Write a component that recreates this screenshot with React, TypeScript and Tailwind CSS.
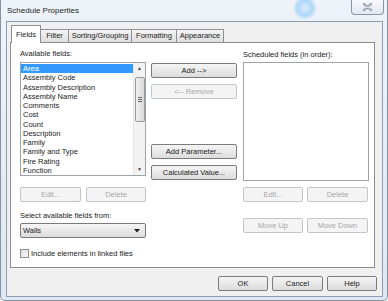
import React from 'react';

const font = { fontFamily: '"Liberation Sans", Arial, sans-serif' };

const fields = [
  'Area',
  'Assembly Code',
  'Assembly Description',
  'Assembly Name',
  'Comments',
  'Cost',
  'Count',
  'Description',
  'Family',
  'Family and Type',
  'Fire Rating',
  'Function',
  'Keynote',
];

const tabs = [
  { label: 'Fields', w: 'w-[30px]' },
  { label: 'Filter', w: 'w-[28px]' },
  { label: 'Sorting/Grouping', w: 'w-[63px]' },
  { label: 'Formatting', w: 'w-[45px]' },
  { label: 'Appearance', w: 'w-[47px]' },
];

function Btn({ label, w, disabled = false }: { label: string; w: string; disabled?: boolean }) {
  return (
    <div
      className={`${w} h-[15px] flex items-center justify-center rounded-[2px] border text-[7.5px] leading-none ${
        disabled
          ? 'border-[#c2c5c9] bg-[#f4f4f4] text-[#a7a7a7]'
          : 'border-[#7b7b7b] bg-gradient-to-b from-[#f5f5f5] to-[#dcdcdc] text-[#1b1b1b]'
      }`}
    >
      {label}
    </div>
  );
}

export default function App() {
  return (
    <div style={font} className="w-[388px] h-[301px] bg-white overflow-hidden">
      <div className="relative w-[388px] h-[301px] bg-gradient-to-b from-[#eef3f9] to-[#dfe8f2] border-x border-b border-[#8592a3] rounded-b-[5px]">
        {/* title */}
        <div className="h-[21px] flex items-center pl-[6px] text-[8px] text-[#1e1e1e]">Schedule Properties</div>

        {/* glow */}
        <div className="absolute left-[292px] top-[-4px] w-[24px] h-[24px] rounded-full bg-[radial-gradient(circle,#d6ecff_0%,#9fd0f5_45%,rgba(200,230,255,0)_72%)] opacity-80" />

        {/* close button */}
        <div className="absolute left-[350px] top-0 w-[33px] h-[15px] rounded-b-[4px] border border-t-0 border-[#8a96a6] bg-gradient-to-b from-[#f7f9fc] to-[#e2e8f0] flex items-center justify-center">
          <svg width="9" height="8" viewBox="0 0 9 8">
            <path d="M1 1 L8 7 M8 1 L1 7" stroke="#7c8590" strokeWidth="2.2" strokeLinecap="round" />
            <path d="M1 1 L8 7 M8 1 L1 7" stroke="#f4f6f8" strokeWidth="0.8" strokeLinecap="round" />
          </svg>
        </div>

        {/* client area */}
        <div className="ml-[5px] w-[377px] h-[276px] border border-[#8e9db1] bg-[#f0f0f0] flex flex-col">
          {/* tabs */}
          <div className="ml-[4px] mt-[3px] flex items-end h-[18px] relative z-10 -mb-px">
            {tabs.map((t, i) =>
              i === 0 ? (
                <div
                  key={t.label}
                  className={`${t.w} h-[18px] border border-b-0 border-[#8c8e94] bg-white text-[7.5px] text-[#1b1b1b] flex items-center justify-center rounded-t-[1px]`}
                >
                  {t.label}
                </div>
              ) : (
                <div
                  key={t.label}
                  className={`${t.w} h-[14px] border border-l-0 border-[#8c8e94] bg-gradient-to-b from-[#f4f4f4] to-[#dedede] text-[7.5px] text-[#1b1b1b] flex items-center justify-center`}
                >
                  {t.label}
                </div>
              )
            )}
          </div>

          {/* panel */}
          <div className="ml-[3px] w-[365px] h-[226px] border border-[#8c8e94] bg-white flex text-[7.5px] text-[#1b1b1b]">
            {/* left column */}
            <div className="ml-[9px] w-[126px] flex flex-col">
              <div className="mt-[6px] h-[9px] leading-[9px]">Available fields:</div>
              <div className="mt-[4px] h-[114px] border border-[#9ea3a9] bg-white flex overflow-hidden">
                <div className="flex-1 pt-px overflow-hidden">
                  {fields.map((f, i) => (
                    <div
                      key={f}
                      className={`h-[9.25px] leading-[9.25px] pl-[2px] whitespace-nowrap ${
                        i === 0 ? 'bg-[#3399ff] text-white' : ''
                      }`}
                    >
                      {f}
                    </div>
                  ))}
                </div>
                <div className="w-[12px] bg-[#f2f2f2] border-l border-[#e6e6e6] flex flex-col items-center">
                  <div className="h-[12px] flex items-center justify-center text-[5px] text-[#3c3c3c]">▲</div>
                  <div className="mt-[2px] w-[10px] h-[45px] rounded-[2px] border border-[#9a9a9a] bg-gradient-to-r from-[#f1f1f1] to-[#d8d8d8] flex flex-col items-center justify-center gap-px">
                    <div className="w-[4px] h-px bg-[#6a6a6a]" />
                    <div className="w-[4px] h-px bg-[#6a6a6a]" />
                    <div className="w-[4px] h-px bg-[#6a6a6a]" />
                  </div>
                  <div className="flex-1" />
                  <div className="h-[10px] flex items-center justify-center text-[5px] text-[#3c3c3c]">▼</div>
                </div>
              </div>
              <div className="mt-[11px] flex gap-[5px]">
                <Btn label="Edit..." w="w-[61px]" disabled />
                <Btn label="Delete" w="w-[60px]" disabled />
              </div>
              <div className="mt-[9px] h-[9px] leading-[9px]">Select available fields from:</div>
              <div className="mt-[3px] w-[126px] h-[15px] rounded-[2px] border border-[#7b7b7b] bg-gradient-to-b from-[#f5f5f5] to-[#dcdcdc] flex items-center pl-[2px] pr-[5px]">
                <span className="flex-1">Walls</span>
                <svg width="6" height="4" viewBox="0 0 6 4">
                  <path d="M0 0 H6 L3 3.5 Z" fill="#1b1b1b" />
                </svg>
              </div>
              <div className="mt-[11px] flex items-center gap-[2px]">
                <div className="w-[9px] h-[9px] border border-[#8f8f8f] bg-gradient-to-br from-[#dcdcdc] to-[#fbfbfb]" />
                <span className="leading-[9px]">Include elements in linked files</span>
              </div>
            </div>

            {/* middle column */}
            <div className="ml-[5px] w-[86px] flex flex-col">
              <div className="mt-[20px]">
                <Btn label="Add -->" w="w-[86px]" />
              </div>
              <div className="mt-[6px]">
                <Btn label="<-- Remove" w="w-[86px]" disabled />
              </div>
              <div className="mt-[45px]">
                <Btn label="Add Parameter..." w="w-[86px]" />
              </div>
              <div className="mt-[6px]">
                <Btn label="Calculated Value..." w="w-[86px]" />
              </div>
            </div>

            {/* right column */}
            <div className="ml-[6px] w-[126px] flex flex-col">
              <div className="mt-[7px] h-[9px] leading-[9px]">Scheduled fields (in order):</div>
              <div className="mt-[3px] h-[119px] border border-[#9ea3a9] bg-white" />
              <div className="mt-[6px] flex gap-[4px]">
                <Btn label="Edit..." w="w-[60px]" disabled />
                <Btn label="Delete" w="w-[61px]" disabled />
              </div>
              <div className="mt-[16px] flex gap-[4px]">
                <Btn label="Move Up" w="w-[60px]" disabled />
                <Btn label="Move Down" w="w-[61px]" disabled />
              </div>
            </div>
          </div>

          {/* bottom buttons */}
          <div className="mt-[8px] flex justify-end gap-[4px] pr-[5px]">
            <Btn label="OK" w="w-[50px]" />
            <Btn label="Cancel" w="w-[51px]" />
            <Btn label="Help" w="w-[50px]" />
          </div>
        </div>
      </div>
    </div>
  );
}
